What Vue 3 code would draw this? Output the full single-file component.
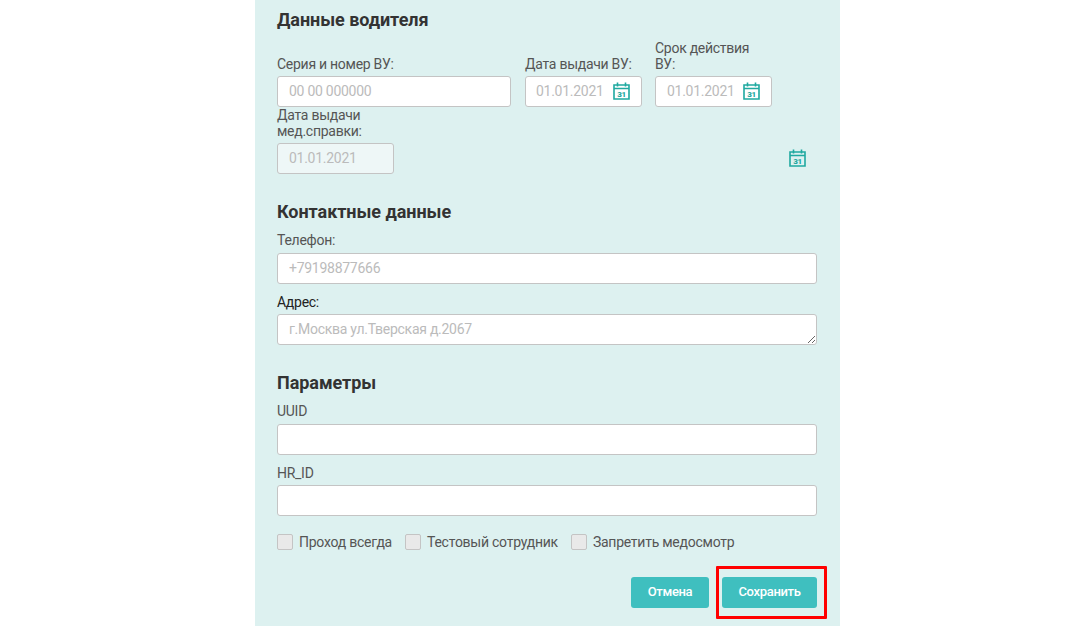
<script setup>
const checks = ['Проход всегда', 'Тестовый сотрудник', 'Запретить медосмотр']
</script>

<template>
  <div class="page">
    <form class="panel" @submit.prevent>
      <h2 class="title first">Данные водителя</h2>
      <div class="row top">
        <label class="field wide">
          <span class="lbl">Серия и номер ВУ:</span>
          <input class="inp" placeholder="00 00 000000" />
        </label>
        <label class="field date">
          <span class="lbl">Дата выдачи ВУ:</span>
          <span class="dwrap">
            <input class="inp" placeholder="01.01.2021" />
            <svg class="cal over" viewBox="0 0 17 18">
              <path class="ln" d="M1 3h15v14H1zM1 6.5h15M4.5 .5v4M12.5 .5v4" />
              <text x="8.5" y="14.7" text-anchor="middle" class="num">31</text>
            </svg>
          </span>
        </label>
        <label class="field date">
          <span class="lbl">Срок действия ВУ:</span>
          <span class="dwrap">
            <input class="inp" placeholder="01.01.2021" />
            <svg class="cal over" viewBox="0 0 17 18">
              <path class="ln" d="M1 3h15v14H1zM1 6.5h15M4.5 .5v4M12.5 .5v4" />
              <text x="8.5" y="14.7" text-anchor="middle" class="num">31</text>
            </svg>
          </span>
        </label>
      </div>
      <div class="row med">
        <label class="field date">
          <span class="lbl">Дата выдачи мед.справки:</span>
          <input class="inp off" placeholder="01.01.2021" disabled />
        </label>
        <svg class="cal loose" viewBox="0 0 17 18">
          <path class="ln" d="M1 3h15v14H1zM1 6.5h15M4.5 .5v4M12.5 .5v4" />
          <text x="8.5" y="14.7" text-anchor="middle" class="num">31</text>
        </svg>
      </div>

      <h2 class="title section">Контактные данные</h2>
      <label class="field after-title">
        <span class="lbl spaced">Телефон:</span>
        <input class="inp" placeholder="+79198877666" />
      </label>
      <label class="field gap-top">
        <span class="lbl dark">Адрес:</span>
        <textarea class="inp area" placeholder="г.Москва ул.Тверская д.2067"></textarea>
      </label>

      <h2 class="title section">Параметры</h2>
      <label class="field after-title">
        <span class="lbl spaced">UUID</span>
        <input class="inp" />
      </label>
      <label class="field gap-top">
        <span class="lbl">HR_ID</span>
        <input class="inp" />
      </label>

      <div class="checks">
        <label v-for="c in checks" :key="c" class="check">
          <span class="box"></span>
          <span>{{ c }}</span>
        </label>
      </div>

      <div class="actions">
        <button type="button" class="btn cancel">Отмена</button>
        <span class="mark"><button type="submit" class="btn save">Сохранить</button></span>
      </div>
    </form>
  </div>
</template>

<style>
html, body { margin: 0; background: #fff; }
</style>

<style scoped>
.page {
  width: 1076px;
  height: 641px;
  overflow: hidden;
  font-family: Roboto, "Liberation Sans", sans-serif;
  color: #555;
}
.panel {
  box-sizing: border-box;
  width: 585px;
  height: 626px;
  margin-left: 255px;
  padding: 9px 23px 0 22px;
  background: #ddf1f0;
  display: flex;
  flex-direction: column;
}
.title {
  margin: 0;
  font-size: 18px;
  line-height: 21px;
  font-weight: 700;
  color: #333;
  letter-spacing: -0.05px;
}
.section { margin-top: 27px; }
.row { display: flex; align-items: flex-end; }
.top { margin-top: 10px; }
.field { display: flex; flex-direction: column; }
.wide { width: 234px; margin-right: 14px; }
.date { width: 117px; }
.date + .date { margin-left: 13px; }
.med { justify-content: space-between; padding-right: 11px; }
.lbl {
  display: block;
  font-size: 14px;
  letter-spacing: -0.27px;
  line-height: 16px;
  margin-bottom: 4px;
  color: #555;
}
.spaced { margin-bottom: 5px; }
.dark { color: #222; }
.after-title { margin-top: 10px; }
.gap-top { margin-top: 10px; }
.inp {
  box-sizing: border-box;
  display: block;
  width: 100%;
  height: 31px;
  margin: 0;
  padding: 0 11px 2px;
  background: #fff;
  border: 1px solid #c4c4c4;
  border-radius: 3px;
  font: 14px Roboto, "Liberation Sans", sans-serif;
  letter-spacing: -0.27px;
  color: #555;
  outline: none;
}
.inp::placeholder { color: #bbb; opacity: 1; }
.dwrap .inp { padding-left: 10px; }
.date + .date .inp { padding-left: 11px; }
.off { background: #eef7f7; }
.area {
  padding-top: 6px;
  padding-bottom: 0;
  line-height: 17px;
  resize: vertical;
}
.dwrap { position: relative; display: block; }
.cal { display: block; width: 17px; height: 18px; color: #1fa9a0; }
.over { position: absolute; left: 88px; top: 6px; }
.loose { margin-bottom: 7px; }
.ln { fill: none; stroke: currentColor; stroke-width: 1.6; }
.num { font: 900 8px Roboto, sans-serif; fill: currentColor; letter-spacing: -0.3px; }
.checks { display: flex; margin-top: 18px; }
.check {
  display: flex;
  align-items: flex-start;
  font-size: 14px;
  letter-spacing: -0.25px;
  line-height: 17px;
  margin-right: 13px;
  color: #555;
}
.box {
  box-sizing: border-box;
  width: 16px;
  height: 16px;
  margin-right: 6px;
  background: #e9e9e9;
  border: 1px solid #c4c4c4;
  border-radius: 2px;
}
.actions {
  display: flex;
  justify-content: flex-end;
  align-items: center;
  margin-top: 15px;
}
.btn {
  height: 31px;
  padding: 0 0 2px;
  border: 0;
  border-radius: 3px;
  background: #3fbfbf;
  color: #fff;
  font: 500 13px Roboto, "Liberation Sans", sans-serif;
  letter-spacing: -0.33px;
}
.cancel { width: 78px; margin-right: 7px; }
.save { width: 95px; display: block; }
.mark {
  display: block;
  margin-right: -10px;
  padding: 8px 7px 8px 3px;
  border: 3px solid #f00;
  border-radius: 1px;
}
</style>
